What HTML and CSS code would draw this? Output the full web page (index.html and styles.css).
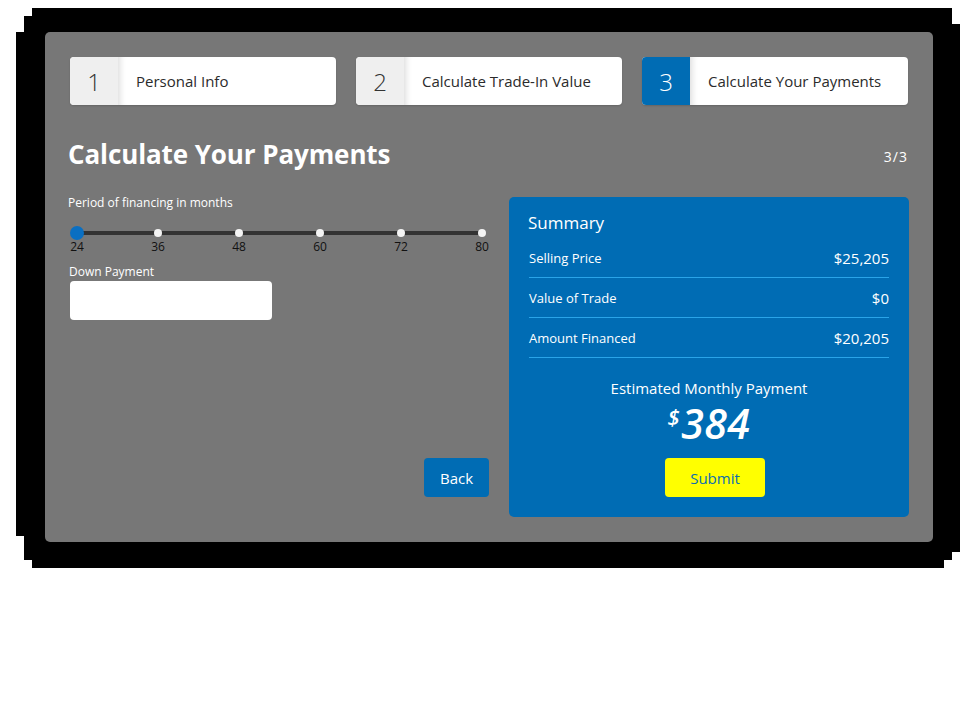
FILE: index.html
```html
<!DOCTYPE html>
<html lang="en">
<head>
<meta charset="utf-8">
<title>Calculate Your Payments</title>
<link rel="stylesheet" href="styles.css">
</head>
<body>
<div class="frame">
  <div class="panel">
    <div class="steps">
      <div class="step"><span class="step-num">1</span><span class="step-label">Personal Info</span></div>
      <div class="step"><span class="step-num">2</span><span class="step-label">Calculate Trade-In Value</span></div>
      <div class="step step-active"><span class="step-num">3</span><span class="step-label">Calculate Your Payments</span></div>
    </div>
    <div class="head">
      <h1 class="title">Calculate Your Payments</h1>
      <span class="counter">3/3</span>
    </div>
    <div class="content">
      <div class="form">
        <label class="field-label">Period of financing in months</label>
        <div class="slider">
          <div class="stops">
            <span class="stop"><span class="handle"></span></span>
            <span class="stop"><span class="dot"></span></span>
            <span class="stop"><span class="dot"></span></span>
            <span class="stop"><span class="dot"></span></span>
            <span class="stop"><span class="dot"></span></span>
            <span class="stop"><span class="dot"></span></span>
          </div>
          <div class="ticks">
            <span class="tick">24</span>
            <span class="tick">36</span>
            <span class="tick">48</span>
            <span class="tick">60</span>
            <span class="tick">72</span>
            <span class="tick">80</span>
          </div>
        </div>
        <label class="field-label down-label">Down Payment</label>
        <input class="input" type="text">
        <button class="btn btn-back">Back</button>
      </div>
      <div class="summary">
        <h2 class="summary-title">Summary</h2>
        <div class="row"><span>Selling Price</span><span class="val">$25,205</span></div>
        <div class="row"><span>Value of Trade</span><span class="val">$0</span></div>
        <div class="row"><span>Amount Financed</span><span class="val">$20,205</span></div>
        <div class="estimate-label">Estimated Monthly Payment</div>
        <div class="estimate"><span class="cur">$</span>384</div>
        <button class="btn btn-submit">Submit</button>
      </div>
    </div>
  </div>
</div>
</body>
</html>
```

FILE: styles.css
```css
* { box-sizing: border-box; }
html, body { margin: 0; padding: 0; background: #ffffff; }
body { font-family: "Open Sans", "Liberation Sans", sans-serif; }

.frame {
  width: 944px;
  height: 560px;
  margin: 8px 0 0 16px;
  padding: 24px 27px 26px 29px;
  background: #000;
  clip-path: polygon(16px 0, 936px 0, 936px 16px, 944px 16px, 944px 544px, 936px 544px, 936px 552px, 928px 552px, 928px 560px, 16px 560px, 16px 552px, 8px 552px, 8px 528px, 0 528px, 0 24px, 8px 24px, 8px 8px, 16px 8px);
}

.panel {
  width: 888px;
  height: 510px;
  background: #777777;
  border-radius: 5px;
  padding: 25px 24px 25px 25px;
  display: flex;
  flex-direction: column;
}

.steps {
  display: grid;
  grid-template-columns: repeat(3, 266px);
  gap: 20px;
}
.step {
  display: flex;
  height: 48px;
  border-radius: 4px;
  overflow: hidden;
  background: #fff;
  box-shadow: 0 1px 2px rgba(0,0,0,0.15);
}
.step-num {
  width: 48px;
  flex: none;
  display: flex;
  align-items: center;
  justify-content: center;
  background: #efefef;
  color: #333;
  font-size: 24px;
  font-weight: 300;
}
.step-active .step-num { background: #006cb4; color: #fff; }
.step-label {
  flex: 1;
  display: flex;
  align-items: center;
  padding-left: 18px;
  font-size: 15px;
  color: #2b2b2b;
  box-shadow: inset 7px 0 6px -5px rgba(0,0,0,0.14);
}

.head {
  display: flex;
  justify-content: space-between;
  align-items: center;
  margin-top: 34px;
  height: 30px;
}
.title {
  margin: 0 0 0 -2px;
  font-size: 26px;
  font-weight: 700;
  color: #fff;
  letter-spacing: -0.1px;
}
.counter {
  color: #fff;
  font-size: 14px;
  letter-spacing: 1px;
  margin-top: 4px;
  margin-right: 1px;
}

.content {
  display: flex;
  gap: 20px;
  margin-top: 28px;
  flex: 1;
  min-height: 0;
}

.form {
  width: 419px;
  display: flex;
  flex-direction: column;
  align-items: flex-start;
}
.field-label {
  display: block;
  font-size: 12px;
  line-height: 14px;
  color: #fff;
  margin-top: -1px;
  margin-left: -2px;
}
.slider { width: 419px; margin-top: 16px; }
.stops {
  display: flex;
  justify-content: space-between;
  height: 14px;
  background: linear-gradient(#333, #333) center / calc(100% - 14px) 4px no-repeat;
}
.stop {
  width: 14px;
  height: 14px;
  display: flex;
  align-items: center;
  justify-content: center;
}
.handle { width: 14px; height: 14px; border-radius: 50%; background: #0a6fc2; }
.dot { width: 8px; height: 8px; border-radius: 50%; background: #f4f4f4; }
.ticks {
  display: flex;
  justify-content: space-between;
}
.tick {
  width: 14px;
  display: flex;
  justify-content: center;
  font-size: 12px;
  line-height: 14px;
  color: #111;
  white-space: nowrap;
}
.down-label { margin-top: 11px; margin-left: -1px; }
.input {
  margin-top: 2px;
  width: 202px;
  height: 39px;
  border: 0;
  border-radius: 4px;
  background: #fff;
}
.btn {
  border: 0;
  border-radius: 4px;
  height: 39px;
  font-family: "Open Sans", "Liberation Sans", sans-serif;
  font-size: 15px;
  cursor: pointer;
}
.btn-back {
  margin-top: auto;
  margin-bottom: 20px;
  align-self: flex-end;
  width: 65px;
  background: #006cb4;
  color: #fff;
}

.summary {
  width: 400px;
  background: #006cb4;
  border-radius: 5px;
  padding: 14px 20px 20px 20px;
  display: flex;
  flex-direction: column;
  color: #fff;
}
.summary-title {
  margin: 0 0 3px -1px;
  font-size: 17px;
  line-height: 24px;
  font-weight: 400;
}
.row {
  display: flex;
  justify-content: space-between;
  align-items: center;
  height: 40px;
  border-bottom: 1px solid #2aa4e8;
  font-size: 13px;
}
.row:nth-of-type(4) { height: 39px; }
.row .val { font-size: 15px; }
.estimate-label {
  margin-top: 20px;
  text-align: center;
  font-size: 15px;
  line-height: 20px;
}
.estimate {
  margin-top: -4px;
  text-align: center;
  font-size: 41px;
  line-height: 44px;
  font-weight: 600;
  font-style: italic;
  letter-spacing: 0.5px;
}
.cur {
  font-size: 22px;
  vertical-align: 14px;
  margin-right: 1px;
}
.btn-submit {
  margin-top: auto;
  margin-left: 12px;
  align-self: center;
  width: 100px;
  background: #ffff00;
  color: #0a6db0;
}
```
